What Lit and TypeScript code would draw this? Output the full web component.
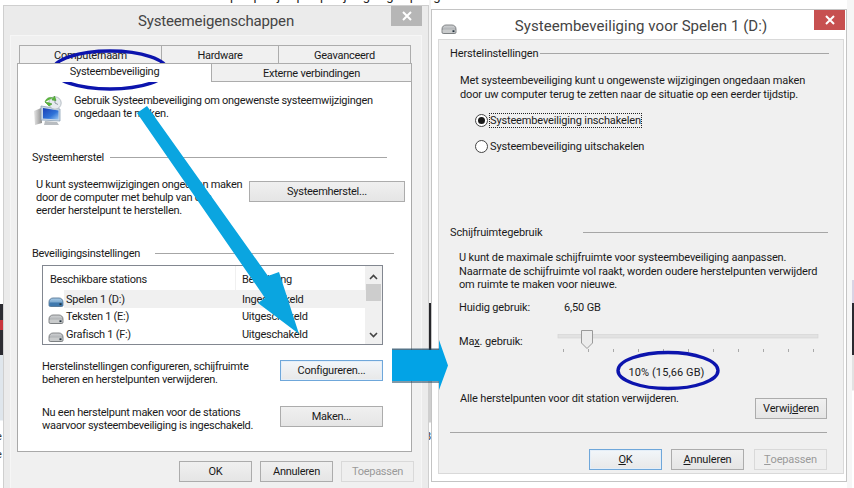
import { LitElement, html, css, svg } from "lit";
import { customElement } from "lit/decorators.js";

const drive = (blue: boolean, cls = "drv") => html`<svg class=${cls} viewBox="0 0 16 10" width="16" height="10">
  <defs><linearGradient id=${blue ? "db" : "dg"} x1="0" y1="0" x2="0" y2="1">
    <stop offset="0" stop-color=${blue ? "#a9cbe6" : "#d4d6d8"}/><stop offset="1" stop-color=${blue ? "#4f86b8" : "#8b8f92"}/></linearGradient></defs>
  <path d="M1 5 C1 2.5 3 1 5 1 H11 C13 1 15 2.5 15 5 V8 C15 9 14.5 9.5 13.5 9.5 H2.5 C1.5 9.5 1 9 1 8 Z" fill=${`url(#${blue ? "db" : "dg"})`} stroke=${blue ? "#47698a" : "#6a6d70"} stroke-width=".8"/>
  <rect x="1.5" y="5.5" width="13" height="3.4" rx="1" fill=${blue ? "#3f78ad" : "#c9cbcc"}/>
  <rect x="11.5" y="6.3" width="2" height="1.8" fill="#22313d"/>
</svg>`;

@customElement("app-root")
export class AppRoot extends LitElement {
  static styles = css`
    :host { display: block; position: relative; width: 854px; height: 488px; overflow: hidden; background: #fff;
      font-family: Roboto, "Open Sans", "Liberation Sans", sans-serif; font-size: 11px; line-height: 13px; color: #1a1a1a; white-space: nowrap; }
    .scrap { position: absolute; top: 0; height: 488px; overflow: hidden; }
    .s-left { left: 0; width: 3px; background: linear-gradient(#fff 0 304px, #2a2a30 304px 320px, #c8343c 320px 330px, #2a2a30 330px 355px, #dfe6ec 355px 420px, #fff 421px); }
    .s-mid { left: 429px; width: 2px; background: linear-gradient(#f4f4f4 0 303px, #26262a 303px 352px, #cfcfcf 352px 422px, #fff 423px); }
    .s-right { left: 847px; width: 7px; background: linear-gradient(90deg, #f6f6f6 0 5px, transparent 5px), linear-gradient(#f6f6f6 0 280px, #d8d4e4 280px 303px, #2a2a30 303px 355px, #e2e2e2 355px 390px, #fff 391px); }
    .frag { position: absolute; left: -4px; font-size: 11px; color: #333; }
    .f1 { top: 430px; } .f2 { top: 448px; }
    .topline { position: absolute; top: -11px; left: 230px; font-size: 13px; color: #222; white-space: pre; word-spacing: 13px; }

    .win { position: absolute; box-sizing: border-box; border: 1px solid #cfcfcf; display: flex; flex-direction: column; }
    .wa { left: 3px; top: 5px; width: 426px; height: 490px; background: #ebebeb; letter-spacing: -0.27px; }
    .wb { left: 431px; top: 9px; width: 416px; height: 473px; background: #fff; border-color: #c4c4c4; letter-spacing: -0.15px; }
    .bar { height: 29px; flex: none; display: flex; align-items: center; justify-content: center; position: relative; font-size: 15px; color: #444; box-sizing: border-box; }
    .wa .bar { letter-spacing: -0.15px; padding-top: 2px; }
    .wb .bar { letter-spacing: 0.05px; padding: 4px 0 0 4px; }
    .close { position: absolute; top: 0; width: 31px; height: 20px; display: flex; align-items: center; justify-content: center; }
    .wa .close { right: 6px; background: #b6b6b6; }
    .wb .close { right: 1px; background: #c75050; }
    .wb .drv { position: absolute; left: 9px; top: 14px; }
    .body { flex: 1; box-sizing: border-box; }
    .wa .body { margin: 0 6px; background: #f0f0f0; border: 1px solid #f6f6f6; padding: 9px 9px 0 6px; }
    .wb .body { margin: 0 2px 7px 6px; background: #f0f0f0; border: 1px solid #d9d9d9; padding: 7px 0 0 11px; }

    .tabs { display: grid; margin-left: 2px; height: 18px; width: 391px; }
    .t1 { grid-template-columns: 142px 117px 132px; }
    .t1 .tab { padding-top: 1px; }
    .t2 { grid-template-columns: 195px 200px; margin-left: 0; width: 395px; height: 19px; position: relative; z-index: 1; margin-bottom: -1px; }
    .tab { box-sizing: border-box; border: 1px solid #acacac; border-bottom: 0; margin-right: -1px; background: #f0f0f0; display: flex; align-items: center; justify-content: center; }
    .tab.on { background: #fff; padding-bottom: 3px; margin-right: 0; }
    .t2 .tab:not(.on) { border-bottom: 1px solid #acacac; border-left: 0; padding-top: 1px; margin-right: 0; background: #f0f0f0; }
    .panel { box-sizing: border-box; width: 395px; height: 371px; background: #fff; border: 1px solid #a9a9a9; }

    .intro { display: flex; gap: 11px; padding: 12px 0 0 15px; }
    .intro svg { flex: none; margin-top: 2px; margin-bottom: -4px; }
    .sec { display: flex; align-items: center; }
    .sec span { flex: none; }
    .sec i { display: block; height: 1px; background: #a6a6a6; margin-top: -1px; }
    .s1 { margin: 29px 0 0 14px; } .s1 span { width: 78px; } .s1 i { width: 277px; }
    .s2 { margin: 30px 0 0 14px; } .s2 span { width: 123px; } .s2 i { width: 239px; }
    .flowrow { display: flex; }
    .r1 { margin: 14px 0 0 18px; } .r1 p { width: 213px; }
    .r1 .btn { width: 156px; margin-top: 3px; }
    .r2 { margin: 15px 0 0 24px; } .r3 { margin: 20px 0 0 24px; }
    .r2 p, .r3 p { width: 238px; }
    .r2 .btn, .r3 .btn { width: 103px; }
    p { margin: 0; }
    .btn { box-sizing: border-box; flex: none; height: 21px; width: 73px; border: 1px solid #acacac; background: linear-gradient(#f0f0f0, #e5e5e5); display: flex; align-items: center; justify-content: center; color: #1a1a1a; }
    .btn.focus { border-color: #6fa7da; background: linear-gradient(#f2f6fa, #e8e8e8); box-shadow: inset 0 0 0 1px #e4eef8; }
    .btn.off { border-color: #d9d9d9; background: #efefef; color: #9a9a9a; }

    .list { box-sizing: border-box; width: 341px; height: 80px; margin: 5px 0 0 24px; border: 1px solid #828790; display: flex; background: #fff; overflow: hidden; }
    .lmain { flex: 1; }
    .lhead { display: grid; grid-template-columns: 192px 1fr; height: 24px; align-items: center; }
    .lhead span { padding-left: 7px; height: 24px; line-height: 27px; }
    .lhead span + span { border-left: 1px solid #f0f0f0; padding-left: 6px; }
    .lrow { display: flex; height: 17.5px; }
    .lico { width: 21px; flex: none; display: flex; align-items: flex-end; justify-content: flex-end; box-sizing: border-box; padding-bottom: 1px; }
    .lcells { flex: 1; display: grid; grid-template-columns: 176px 1fr; align-items: center; padding: 1px 0 0 2px; }
    .lrow.sel .lcells { background: #f0f0f0; }
    .scroll { width: 17px; flex: none; background: #f0f0f0; display: flex; flex-direction: column; align-items: center; }
    .thumb { width: 15px; height: 17px; background: #cdcdcd; }
    .sgrow { flex: 1; }
    .foot { display: flex; gap: 8px; margin: 9px 0 0 162px; }

    .b-s1 span { width: 90px; } .b-s1 i { width: 289px; }
    .b-s2 { margin-top: 73px; } .b-s2 span { width: 133px; } .b-s2 i { width: 245px; }
    .bp { margin: 0 0 0 9px; line-height: 13.5px; }
    .bp1 { margin: 14px 0 0 10px; line-height: 14px; }
    .radio { display: flex; align-items: center; gap: 2px; margin-left: 25px; height: 13px; }
    .rd1 { margin-top: 12px; } .rd2 { margin-top: 13px; }
    .dot { box-sizing: border-box; width: 13px; height: 13px; border-radius: 50%; border: 1px solid #444; background: #fff; display: flex; align-items: center; justify-content: center; }
    .dot b { width: 7px; height: 7px; border-radius: 50%; background: #1a1a1a; }
    .focusr { outline: 1px dotted #222; outline-offset: 0; }
    .bp2 { margin: 12px 0 0 9px; }
    .kv { display: flex; margin: 9px 0 0 9px; height: 13px; }
    .kv span:first-child { width: 105px; }
    .kv2 { margin: 21px 0 0 9px; display: flex; height: 13px; }
    .kv2 span { width: 99px; flex: none; }
    .kv2 svg { flex: none; margin-top: -3px; overflow: visible; }
    .pct { text-align: center; margin: 18px 0 0 0; width: 433px; letter-spacing: 0.1px; }
    .del { display: flex; margin: 13px 0 0 10px; width: 367px; justify-content: space-between; }
    .del .btn { margin-top: 6px; width: 72px; }
    .hr { height: 1px; background: #a6a6a6; width: 377px; margin-top: 13px; }
    .bfoot { display: flex; margin: 16px 0 0 139px; }
    .bfoot .btn + .btn { margin-left: 9px; }
    .bfoot .btn:last-child { margin-left: 10px; }
    u { text-underline-offset: 1px; }

    .over { position: absolute; left: 0; top: 0; pointer-events: none; }
  `;

  private closeX(color = "#fff") {
    return html`<svg width="10" height="10" viewBox="0 0 10 10"><path d="M1 1 L9 9 M9 1 L1 9" stroke=${color} stroke-width="2"/></svg>`;
  }

  private monitorIcon() {
    return html`<svg width="30" height="30" viewBox="0 0 30 30">
      <defs>
        <linearGradient id="scr" x1="0" y1="0" x2="1" y2="1"><stop offset="0" stop-color="#1a3fb5"/><stop offset=".6" stop-color="#2f73d8"/><stop offset="1" stop-color="#9cc8f0"/></linearGradient>
        <linearGradient id="cas" x1="0" y1="0" x2="1" y2="0"><stop offset="0" stop-color="#e6e6e6"/><stop offset="1" stop-color="#8c8c8c"/></linearGradient>
      </defs>
      <path d="M1 15 L8 12 L9 27 L2 29 Z" fill="url(#cas)"/>
      <path d="M8 10 L27 13 L27 25 L8 24 Z" fill="#c9d7e6" stroke="#8da2b8" stroke-width=".8"/>
      <path d="M10 12 L25.5 14.5 L25.5 23.5 L10 22.5 Z" fill="url(#scr)"/>
      <path d="M12 25 L24 26 L26 29 L11 29 Z" fill="#b8bcc0"/>
      <circle cx="22" cy="7" r="6.2" fill="#e6eaee" stroke="#a9b2ba" stroke-width=".8"/>
      <path d="M22 3 V7 L25 8.5" stroke="#7b8791" fill="none" stroke-width=".8"/>
      <path d="M12 6 C13 2 17 0.5 20 2 L19 4 L23 4.5 L21.5 0 L20.5 1.5 M12 6 L16 10 L19 8 L16.5 7 Z" fill="#5cb83c" stroke="#3f962a" stroke-width=".6"/>
    </svg>`;
  }

  private overlay() {
    return html`<svg class="over" width="854" height="488" viewBox="0 0 854 488">
      ${svg`
      <ellipse cx="110" cy="70" rx="57" ry="19" fill="none" stroke="#0c14ad" stroke-width="3.4"/>
      <ellipse cx="668" cy="370.5" rx="50" ry="18" fill="none" stroke="#0c14ad" stroke-width="3.4"/>
      <path d="M137 113 L147 106 L268 276 L279 272 L299 334 L258 303 L265 298 Z" fill="#0aa5e0"/>
      <rect x="392" y="348.5" width="47" height="2" fill="#1c4660" opacity=".75"/>
      <rect x="392" y="380.5" width="47" height="2.5" fill="#1c4660" opacity=".55"/>
      <path d="M392 350 H439 V340 L448 365.5 L439 390 V381 H392 Z" fill="#02a3e6"/>
      `}
    </svg>`;
  }

  render() {
    return html`
      <div class="topline">p p j p p j g g p g</div>
      <div class="scrap s-left"><span class="frag f1">e</span><span class="frag f2">e</span></div>
      <div class="scrap s-mid"><span class="frag f1">8</span></div>
      <div class="scrap s-right"></div>

      <section class="win wa">
        <div class="bar">Systeemeigenschappen<div class="close">${this.closeX()}</div></div>
        <div class="body">
          <div class="tabs t1"><div class="tab">Computernaam</div><div class="tab">Hardware</div><div class="tab">Geavanceerd</div></div>
          <div class="tabs t2"><div class="tab on">Systeembeveiliging</div><div class="tab">Externe verbindingen</div></div>
          <div class="panel">
            <div class="intro">${this.monitorIcon()}<p>Gebruik Systeembeveiliging om ongewenste systeemwijzigingen<br>ongedaan te maken.</p></div>
            <div class="sec s1"><span>Systeemherstel</span><i></i></div>
            <div class="flowrow r1"><p>U kunt systeemwijzigingen ongedaan maken<br>door de computer met behulp van een<br>eerder herstelpunt te herstellen.</p><div class="btn">Systeemherstel...</div></div>
            <div class="sec s2"><span>Beveiligingsinstellingen</span><i></i></div>
            <div class="list">
              <div class="lmain">
                <div class="lhead"><span>Beschikbare stations</span><span>Beveiliging</span></div>
                <div class="lrow sel"><div class="lico">${drive(true)}</div><div class="lcells"><span>Spelen 1 (D:)</span><span>Ingeschakeld</span></div></div>
                <div class="lrow"><div class="lico">${drive(false)}</div><div class="lcells"><span>Teksten 1 (E:)</span><span>Uitgeschakeld</span></div></div>
                <div class="lrow"><div class="lico">${drive(false)}</div><div class="lcells"><span>Grafisch 1 (F:)</span><span>Uitgeschakeld</span></div></div>
              </div>
              <div class="scroll">
                <svg width="15" height="18" viewBox="0 0 15 18"><path d="M4 13 L7.5 9.5 L11 13" fill="none" stroke="#444" stroke-width="1.6"/></svg>
                <div class="thumb"></div><div class="sgrow"></div>
                <svg width="15" height="16" viewBox="0 0 15 16"><path d="M4 5 L7.5 8.5 L11 5" fill="none" stroke="#444" stroke-width="1.6"/></svg>
              </div>
            </div>
            <div class="flowrow r2"><p>Herstelinstellingen configureren, schijfruimte<br>beheren en herstelpunten verwijderen.</p><div class="btn focus">Configureren...</div></div>
            <div class="flowrow r3"><p>Nu een herstelpunt maken voor de stations<br>waarvoor systeembeveiliging is ingeschakeld.</p><div class="btn">Maken...</div></div>
          </div>
          <div class="foot"><div class="btn">OK</div><div class="btn">Annuleren</div><div class="btn off">Toepassen</div></div>
        </div>
      </section>

      <section class="win wb">
        <div class="bar">${drive(false)}Systeembeveiliging voor Spelen 1 (D:)<div class="close">${this.closeX()}</div></div>
        <div class="body">
          <div class="sec b-s1"><span>Herstelinstellingen</span><i></i></div>
          <p class="bp1">Met systeembeveiliging kunt u ongewenste wijzigingen ongedaan maken<br>door uw computer terug te zetten naar de situatie op een eerder tijdstip.</p>
          <div class="radio rd1"><div class="dot"><b></b></div><span class="focusr">Systeembeveiliging inschakelen</span></div>
          <div class="radio rd2"><div class="dot"></div><span>Systeembeveiliging uitschakelen</span></div>
          <div class="sec b-s2"><span>Schijfruimtegebruik</span><i></i></div>
          <p class="bp bp2">U kunt de maximale schijfruimte voor systeembeveiliging aanpassen.<br>Naarmate de schijfruimte vol raakt, worden oudere herstelpunten verwijderd<br>om ruimte te maken voor nieuwe.</p>
          <div class="kv"><span>Huidig gebruik:</span><span>6,50 GB</span></div>
          <div class="kv2"><span>Ma<u>x</u>. gebruik:</span>
            <svg width="260" height="24" viewBox="0 0 260 24">
              <rect x="0" y="2.5" width="260" height="3.5" fill="#e2e2e2" stroke="#d2d2d2" stroke-width=".6"/>
              ${[5,30,55,80,105,130,155,180,205,230,255].map(x => svg`<rect x=${x} y="17" width="1" height="3" fill="#a8a8a8"/>`)}
              <path d="M23.5 -1.5 H34.5 V11 L29 16.5 L23.5 11 Z" fill="#ececec" stroke="#9a9a9a"/>
            </svg>
          </div>
          <div class="pct">10% (15,66 GB)</div>
          <div class="del"><span>Alle herstelpunten voor dit station verwijderen.</span><div class="btn">Verwij<u>d</u>eren</div></div>
          <div class="hr"></div>
          <div class="bfoot"><div class="btn focus"><u>O</u>K</div><div class="btn"><u>A</u>nnuleren</div><div class="btn off"><u>T</u>oepassen</div></div>
        </div>
      </section>
      ${this.overlay()}
    `;
  }
}
